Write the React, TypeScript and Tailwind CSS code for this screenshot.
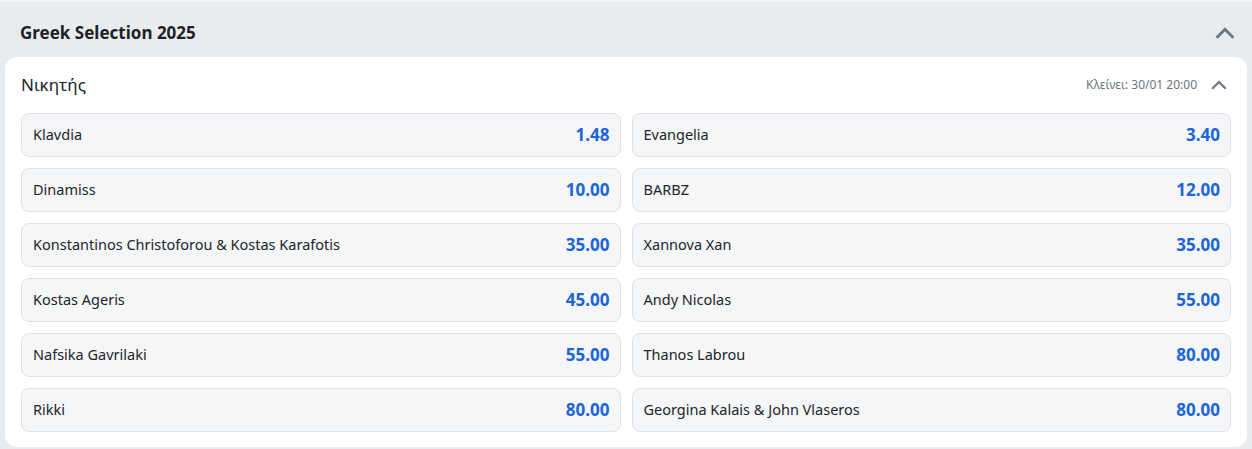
import React from 'react';

const odds = [
  ['Klavdia', '1.48'],
  ['Evangelia', '3.40'],
  ['Dinamiss', '10.00'],
  ['BARBZ', '12.00'],
  ['Konstantinos Christoforou & Kostas Karafotis', '35.00'],
  ['Xannova Xan', '35.00'],
  ['Kostas Ageris', '45.00'],
  ['Andy Nicolas', '55.00'],
  ['Nafsika Gavrilaki', '55.00'],
  ['Thanos Labrou', '80.00'],
  ['Rikki', '80.00'],
  ['Georgina Kalais & John Vlaseros', '80.00'],
];

const Chevron = ({ size, stroke }: { size: number; stroke: number }) => (
  <svg width={size} height={size} viewBox="0 0 24 24" fill="none" stroke="#6b7785" strokeWidth={stroke} strokeLinecap="square">
    <path d="M4 16 L12 8 L20 16" />
  </svg>
);

const App = () => {
  return (
    <div className="w-[1252px] h-[449px] bg-[#e9ecef] font-['Noto_Sans',sans-serif] overflow-hidden border-t-2 border-[#f3f4f6]">
      <div className="flex items-center justify-between h-[55px] pt-[7px] pl-5 pr-[16px]">
        <div className="text-[17px] font-bold text-[#1e2226]">Greek Selection 2025</div>
        <Chevron size={22} stroke={3.2} />
      </div>
      <div className="mx-[5px] bg-white rounded-xl px-4 pt-3 pb-[15px]">
        <div className="flex items-center justify-between h-[32px] mb-[12px] pr-[3px]">
          <div className="text-[17px] text-[#212529]">Νικητής</div>
          <div className="flex items-center gap-[13px]">
            <span className="text-[12px] text-[#6c757d]">Κλείνει: 30/01 20:00</span>
            <Chevron size={18} stroke={3} />
          </div>
        </div>
        <div className="grid grid-cols-2 gap-x-[11px] gap-y-[11px]">
          {odds.map(([name, price]) => (
            <div
              key={name}
              className="flex items-center justify-between h-[44px] pl-[11px] pr-[10px] bg-[#f5f6f8] border border-[#dee2e6] rounded-lg"
            >
              <span className="text-[14.5px] text-[#212529] -mt-[1px]">{name}</span>
              <span className="text-[17px] font-bold text-[#1b64da]">{price}</span>
            </div>
          ))}
        </div>
      </div>
    </div>
  );
};

export default App;
